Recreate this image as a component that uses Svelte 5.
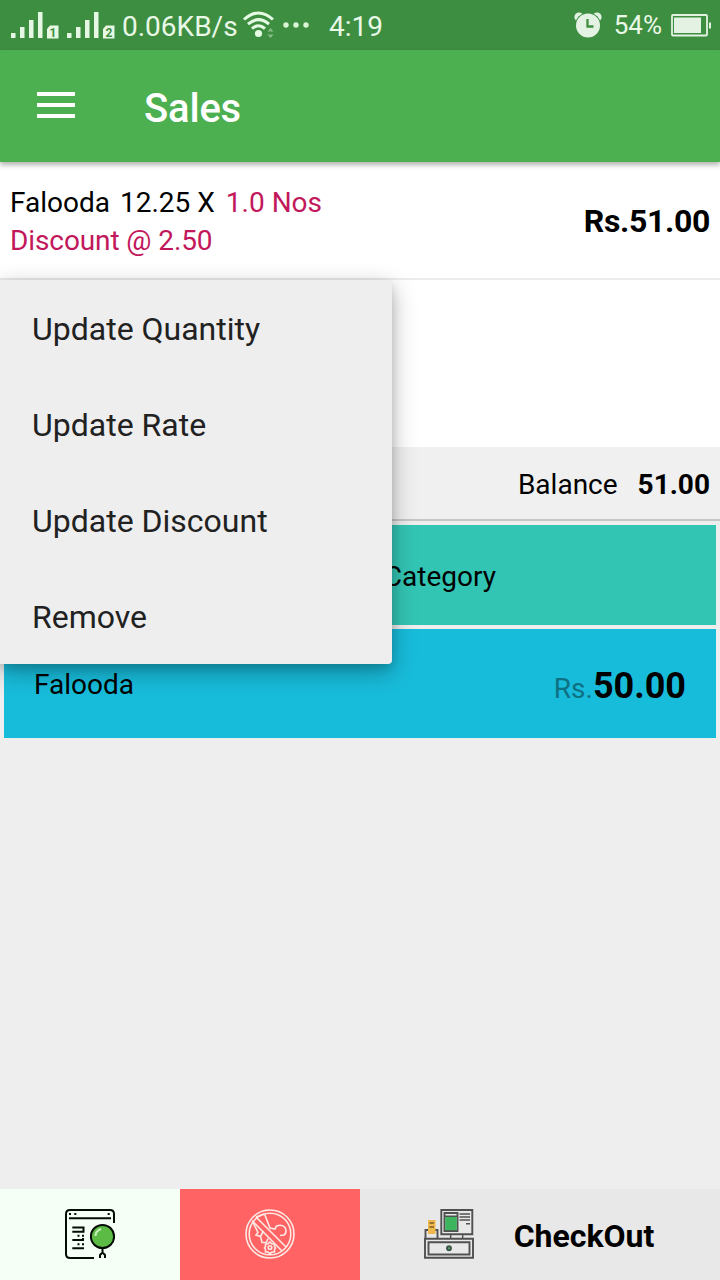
<script>
  let item = { name: 'Falooda', rate: '12.25', qty: '1.0 Nos', discount: '2.50', total: '51.00' };
  let balance = '51.00';
  let actions = ['Update Quantity', 'Update Rate', 'Update Discount', 'Remove'];
  let sims = [1, 2];
</script>

<main>
  <div class="status">
    {#each sims as sim}
      <svg class="signal" width="48" height="28" viewBox="0 0 48 28">
        <path d="M0 22h4.500v5H0zM9 16h4.500v11H9zM18 9h4.500v18H18zM27 1h4.500v26H27z" fill="#e6f8e3" />
        <path d="M39 14.500h8.500v13H36V18z" fill="#e6f8e3" />
        <text x="42" y="26" text-anchor="middle">{sim}</text>
      </svg>
    {/each}
    <span class="speed">0.06KB/s</span>
    <svg class="wifi" width="34" height="28" viewBox="0 0 34 28" fill="none" stroke="#e6fbe3">
      <path d="M1 8.500Q15.500-4.500 30 8.500" stroke-width="3" />
      <path d="M5 13.200Q15.500 4 26 13.200" stroke-width="3" />
      <path d="M9 17.700Q15.500 11.700 22 17.700" stroke-width="3" />
      <circle cx="15.500" cy="22.500" r="3.600" fill="#e6fbe3" stroke="none" />
      <path d="M24.500 20.500l3-3.500 3 3.500zM24.500 23.500l3 3.500 3-3.500z" fill="#86bd85" stroke="none" />
    </svg>
    <svg class="more" width="26" height="6" viewBox="0 0 26 6" fill="#d9f5d6">
      <circle cx="3" cy="3" r="2.700" /><circle cx="13" cy="3" r="2.700" /><circle cx="23" cy="3" r="2.700" />
    </svg>
    <span class="time">4:19</span>
    <svg class="alarm" width="28" height="26" viewBox="0 0 28 26">
      <circle cx="5" cy="5" r="4.600" fill="#e4f2e3" /><circle cx="23" cy="5" r="4.600" fill="#e4f2e3" />
      <circle cx="14" cy="13.500" r="13" fill="#3e8e41" />
      <circle cx="14" cy="13.500" r="12" fill="#e4f2e3" />
      <path d="M13.500 7v7.500h6" fill="none" stroke="#3e8e41" stroke-width="2.300" />
    </svg>
    <span class="percent">54%</span>
    <svg class="battery" width="40" height="23" viewBox="0 0 40 23">
      <rect x="1" y="1" width="35" height="20.500" rx="1" fill="none" stroke="#e4f2e3" stroke-width="1.800" />
      <path d="M3 3.500h27v15.500H3zM38 8.500h2v6h-2z" fill="#e4f2e3" />
    </svg>
  </div>

  <header>
    <svg width="38" height="26" viewBox="0 0 38 26"><path d="M0 0h38v4H0zM0 11h38v4H0zM0 22h38v4H0z" fill="#fff" /></svg>
    <h1>Sales</h1>
  </header>

  <section class="cart">
    <div class="row">
      <div class="info">
        <div><span>{item.name}</span><span class="rate">{item.rate} X</span><span class="pink qty">{item.qty}</span></div>
        <div class="pink discount">Discount @ {item.discount}</div>
      </div>
      <strong>Rs.{item.total}</strong>
    </div>
    <ul class="menu">
      {#each actions as action}
        <li>{action}</li>
      {/each}
    </ul>
  </section>

  <div class="balance"><span>Balance</span><b>{balance}</b></div>

  <section class="products">
    <div class="category">Category</div>
    <div class="product">
      <span>Falooda</span>
      <span class="price"><small>Rs.</small><b>50.00</b></span>
    </div>
  </section>

  <footer>
    <div class="search">
      <svg width="50" height="50" viewBox="0 0 50 50" fill="none" stroke="#050b05" stroke-width="2">
        <path d="M49 14V5q0-4-4-4H5Q1 1 1 5v40q0 4 4 4h24" />
        <path d="M4 9.300h42M7.300 18.500h11.200v4.300H7.300M7.300 31H19M7.300 39.300H19M18 31v-2" />
        <path d="M4 5h2M9.300 5h2M42.700 5h2M12.500 26.700h2M17 26.700h2M12.500 35.300h2M17 35.300h2" />
        <circle cx="37.500" cy="27.500" r="11.600" fill="#5bbb45" />
        <path d="M30.500 27q0-5 5.500-7" stroke="#c5f0b8" stroke-width="2.200" />
        <path d="M37.500 39v5M35 49v-3l2.500-2.500L40 46v3" />
      </svg>
    </div>
    <div class="clear">
      <svg width="50" height="50" viewBox="0 0 50 50" fill="none" stroke="#ffe9e4" stroke-width="1.600">
        <circle cx="25" cy="25" r="24" />
        <circle cx="25" cy="25" r="20.800" />
        <path d="M7 11.500L37 42M11 8l30 30M11 8l8.500-3" />
        <path d="M19.500 5l5.500 14 5 1 1.500-3q6-2 8.500 1.500 2.500 5-1 7.500l-4 .5" />
        <path d="M7.500 12.500L13 23.500l-2 2.500 4.500 1.500 3-5.500M15.500 27.500l1.500 6h4.500l1.500-4" />
        <circle cx="25" cy="38.500" r="1.800" />
        <path d="M25 33l2 2h2.500v2.500l1 1.500-1 1.500V43H27l-2 1.500-2-1.500h-2.500v-2.500l-1-1.500 1-1.500V35H23zM25 44.500V46" />
      </svg>
    </div>
    <div class="checkout">
      <svg width="50" height="50" viewBox="0 0 50 50" fill="none" stroke="#505050" stroke-width="1.900">
        <path d="M1.500 29V21h12v8" />
        <path d="M4 11h7.500v14H4z" fill="#efb84a" stroke="none" />
        <path d="M5.500 14h4.500M5.500 18h4.500" stroke="#7d5d2b" stroke-width="1.400" />
        <path d="M17.300 1h31v24.200h-31z" />
        <path d="M20.500 4h13v18h-13z" fill="#e9e9e9" />
        <path d="M21.300 8h11.400v13.200H21.300z" fill="#3db55e" stroke="none" />
        <path d="M21 7.300h12M35.500 5H46M35.500 8H46M35.500 11H46M42 14.700h4M26.700 25v4M38.700 25v4" stroke-width="1.400" />
        <path d="M1 29.800h48v19H1zM4.500 33.300h41v12.200h-41z" />
        <circle cx="25" cy="39.300" r="2" fill="#5fa873" stroke="#3d5547" />
      </svg>
      <b>CheckOut</b>
    </div>
  </footer>
</main>

<style>
  :global(body) {
    margin: 0;
  }

  main {
    display: flex;
    flex-direction: column;
    width: 720px;
    height: 1280px;
    overflow: hidden;
    background: #eee;
    color: #000;
    font-family: Roboto, sans-serif;
    font-size: 28px;
    line-height: 38px;
  }

  .status {
    display: flex;
    align-items: center;
    box-sizing: border-box;
    height: 50px;
    padding-left: 11px;
    padding-right: 9px;
    background: #3e8e41;
    color: #e9f8e7;
    white-space: nowrap;
  }

  .status svg,
  .status span {
    flex: none;
  }

  .signal {
    margin-right: 8px;
  }

  .signal text {
    font: bold 12px Roboto, sans-serif;
    fill: #3e8e41;
  }

  .speed {
    width: 120px;
    margin-left: -1px;
    padding-top: 3px;
  }

  .wifi {
    margin-left: 1px;
  }

  .more {
    margin-left: 6px;
  }

  .time {
    margin-left: 20px;
    padding-top: 3px;
  }

  .alarm {
    margin-left: auto;
  }

  .percent {
    margin: 0 9px 0 12px;
    font-size: 26px;
  }

  header {
    position: relative;
    z-index: 1;
    display: flex;
    align-items: center;
    box-sizing: border-box;
    height: 112px;
    padding-left: 37px;
    background: #4caf50;
    box-shadow: 0 3px 5px rgba(0, 0, 0, 0.3);
    color: #fff;
  }

  header svg {
    margin-top: -2px;
  }

  h1 {
    margin: 6px 0 0 69px;
    font-size: 40px;
    font-weight: 500;
    letter-spacing: -0.2px;
  }

  .cart {
    position: relative;
    height: 285px;
    background: #fff;
  }

  .row {
    display: flex;
    justify-content: space-between;
    box-sizing: border-box;
    height: 118px;
    padding: 22px 10px 0;
    border-bottom: 2px solid #ececec;
  }

  .row strong {
    padding-top: 18px;
    font-size: 32px;
    letter-spacing: -0.35px;
  }

  .rate {
    margin: 0 11px 0 10px;
  }

  .pink {
    color: #c2185b;
  }

  .discount {
    letter-spacing: -0.1px;
  }

  .menu {
    position: absolute;
    z-index: 2;
    top: 118px;
    left: 0;
    width: 392px;
    margin: 0;
    padding: 0;
    list-style: none;
    background: #eee;
    border-radius: 0 4px 4px 0;
    box-shadow: 0 8px 24px rgba(0, 0, 0, 0.3), 0 4px 10px rgba(0, 0, 0, 0.12);
    color: #212121;
    font-size: 32px;
  }

  .menu li {
    height: 96px;
    padding-left: 32px;
    line-height: 99px;
  }

  .balance {
    display: flex;
    justify-content: flex-end;
    align-items: center;
    gap: 20px;
    box-sizing: border-box;
    height: 74px;
    padding: 3px 10px 0 0;
    background: #f0f0f0;
    border-bottom: 2px solid #c6c6c6;
  }

  .products {
    display: flex;
    flex-direction: column;
    gap: 4px;
    padding: 4px;
  }

  .category {
    height: 100px;
    padding-right: 220px;
    background: #33c5b4;
    line-height: 103px;
    text-align: right;
  }

  .product {
    display: flex;
    justify-content: space-between;
    box-sizing: border-box;
    height: 109px;
    padding: 37px 30px 0 30px;
    background: #18bcdb;
  }

  .price {
    padding-top: 1px;
  }

  .price small {
    color: #0e7083;
    font-size: 28px;
  }

  .price b {
    font-size: 36px;
  }

  footer {
    display: grid;
    grid-template-columns: 180px 180px 360px;
    height: 91px;
    margin-top: auto;
  }

  footer div {
    display: flex;
    align-items: center;
    justify-content: center;
  }

  footer svg {
    margin-top: -1px;
  }

  .search {
    background: #f5fff5;
  }

  .clear {
    background: #ff6363;
  }

  .checkout {
    gap: 40px;
    padding-right: 2px;
    background: #e8e8e8;
    font-size: 32px;
  }

  .checkout b {
    padding-top: 2px;
  }
</style>
